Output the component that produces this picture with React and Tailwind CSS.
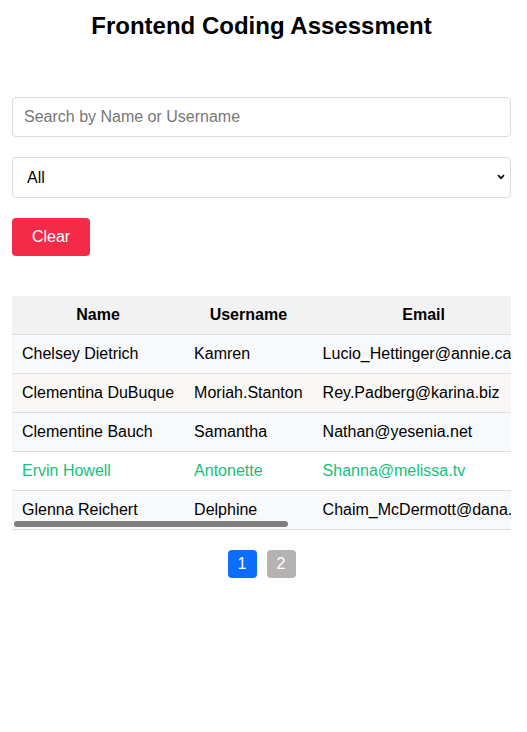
import { useState } from "react";

const users = [
    { name: "Chelsey Dietrich", username: "Kamren", email: "Lucio_Hettinger@annie.ca", phone: "(254)954-1289", website: "demarco.info" },
    { name: "Clementina DuBuque", username: "Moriah.Stanton", email: "Rey.Padberg@karina.biz", phone: "024-648-3804", website: "ambrose.net" },
    { name: "Clementine Bauch", username: "Samantha", email: "Nathan@yesenia.net", phone: "1-463-123-4447", website: "ramiro.info" },
    { name: "Ervin Howell", username: "Antonette", email: "Shanna@melissa.tv", phone: "010-692-6593 x09125", website: "anastasia.net" },
    { name: "Glenna Reichert", username: "Delphine", email: "Chaim_McDermott@dana.io", phone: "(775)976-6794 x41206", website: "conrad.com" },
];

const rowBg = ["bg-[#f8f9fb]", "bg-[#f9f8f6]", "bg-[#f8f9fb]", "bg-white", "bg-[#f8f9fb]"];

function App() {
    const [search, setSearch] = useState("");
    const [filter, setFilter] = useState("all");
    const [page, setPage] = useState(1);

    return (
        <div className="min-h-[732px] bg-white pl-3 pr-4 pt-3 text-black font-['Liberation_Sans',Arial,sans-serif]">
            <h1 className="text-center text-[24px] font-bold leading-[28px]">Frontend Coding Assessment</h1>

            {/* Filters */}
            <div className="mt-[57px] flex flex-col gap-5">
                <input
                    value={search}
                    onChange={(e) => setSearch(e.target.value)}
                    placeholder="Search by Name or Username"
                    className="h-10 w-full rounded-[4px] border border-[#dcdcdc] px-[11px] text-[16px] outline-none placeholder:text-[#777]"
                />
                <div className="relative">
                    <select
                        value={filter}
                        onChange={(e) => setFilter(e.target.value)}
                        className="h-[41px] w-full appearance-none rounded-[4px] border border-[#dcdcdc] bg-white pl-[14px] text-[16px] outline-none"
                    >
                        <option value="all">All</option>
                        <option value="a">A-M</option>
                        <option value="n">N-Z</option>
                    </select>
                    <svg className="pointer-events-none absolute right-[6px] top-[17px]" width="8" height="6" viewBox="0 0 8 6">
                        <path d="M1 1.2 L4 4.2 L7 1.2" fill="none" stroke="#111" strokeWidth="1.8" />
                    </svg>
                </div>
                <div>
                    <button
                        onClick={() => { setSearch(""); setFilter("all"); }}
                        className="h-[38px] w-[78px] rounded-[4px] bg-[#f42b48] text-[16px] text-white"
                    >
                        Clear
                    </button>
                </div>
            </div>

            {/* Table */}
            <div className="relative mt-10 overflow-hidden">
                <table className="border-collapse text-[16px] leading-[18px] whitespace-nowrap">
                    <thead>
                        <tr className="border-b border-[#dedede] bg-[#f2f2f2]">
                            <th className="px-[10px] py-[10px] font-bold">Name</th>
                            <th className="px-[10px] py-[10px] font-bold">Username</th>
                            <th className="px-[10px] py-[10px] font-bold">Email</th>
                            <th className="px-[10px] py-[10px] font-bold">Phone</th>
                            <th className="px-[10px] py-[10px] font-bold">Website</th>
                        </tr>
                    </thead>
                    <tbody>
                        {users.map((u, i) => (
                            <tr key={u.email} className={`border-b border-[#dedede] ${rowBg[i]} ${u.name === "Ervin Howell" ? "text-[#17c07e]" : ""}`}>
                                <td className="px-[10px] py-[10px] text-left">{u.name}</td>
                                <td className="px-[10px] py-[10px] text-left">{u.username}</td>
                                <td className="px-[10px] py-[10px] text-left">{u.email}</td>
                                <td className="px-[10px] py-[10px] text-left">{u.phone}</td>
                                <td className="px-[10px] py-[10px] text-left">{u.website}</td>
                            </tr>
                        ))}
                    </tbody>
                </table>
                {/* overlay scrollbar thumb */}
                <div className="absolute bottom-[3px] left-[2px] h-[6px] w-[274px] rounded-full bg-[#7f7f7f]" />
            </div>

            {/* Pagination */}
            <div className="mt-5 flex justify-center gap-[10px]">
                {[1, 2].map((p) => (
                    <button
                        key={p}
                        onClick={() => setPage(p)}
                        className={`h-[28px] w-[29px] rounded-[4px] text-[16px] text-white ${page === p ? "bg-[#0d6efd]" : "bg-[#b5b2b2]"}`}
                    >
                        {p}
                    </button>
                ))}
            </div>
        </div>
    );
}

export default App;
